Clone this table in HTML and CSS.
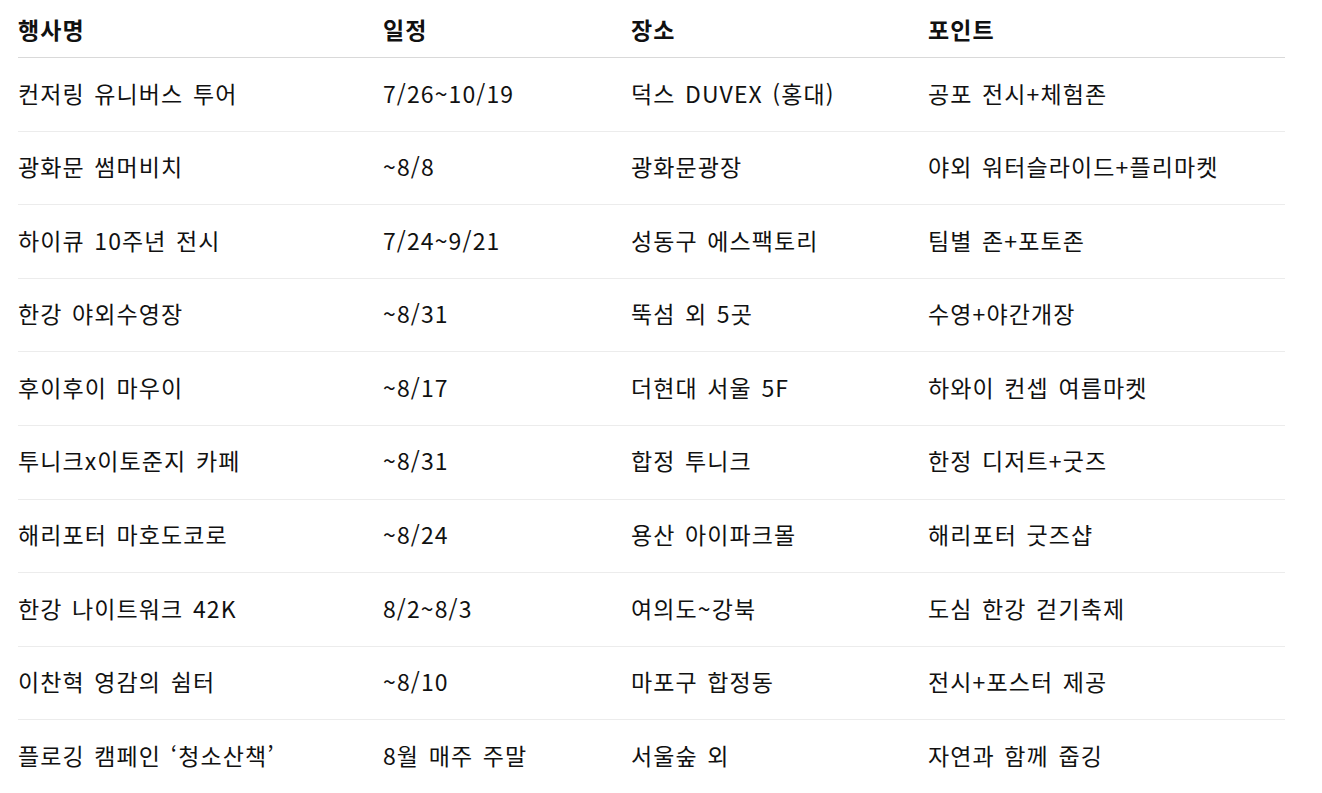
FILE: index.html
```html
<!DOCTYPE html>
<html lang="ko">
<head>
<meta charset="utf-8">
<link rel="stylesheet" href="styles.css">
</head>
<body>
<table class="events">
  <colgroup>
    <col class="c1"><col class="c2"><col class="c3"><col class="c4">
  </colgroup>
  <thead>
    <tr><th>행사명</th><th>일정</th><th>장소</th><th>포인트</th></tr>
  </thead>
  <tbody>
    <tr><td>컨저링 유니버스 투어</td><td>7/26~10/19</td><td>덕스 DUVEX (홍대)</td><td>공포 전시+체험존</td></tr>
    <tr><td>광화문 썸머비치</td><td>~8/8</td><td>광화문광장</td><td>야외 워터슬라이드+플리마켓</td></tr>
    <tr><td>하이큐 10주년 전시</td><td>7/24~9/21</td><td>성동구 에스팩토리</td><td>팀별 존+포토존</td></tr>
    <tr><td>한강 야외수영장</td><td>~8/31</td><td>뚝섬 외 5곳</td><td>수영+야간개장</td></tr>
    <tr><td>후이후이 마우이</td><td>~8/17</td><td>더현대 서울 5F</td><td>하와이 컨셉 여름마켓</td></tr>
    <tr><td>투니크x이토준지 카페</td><td>~8/31</td><td>합정 투니크</td><td>한정 디저트+굿즈</td></tr>
    <tr><td>해리포터 마호도코로</td><td>~8/24</td><td>용산 아이파크몰</td><td>해리포터 굿즈샵</td></tr>
    <tr><td>한강 나이트워크 42K</td><td>8/2~8/3</td><td>여의도~강북</td><td>도심 한강 걷기축제</td></tr>
    <tr><td>이찬혁 영감의 쉼터</td><td>~8/10</td><td>마포구 합정동</td><td>전시+포스터 제공</td></tr>
    <tr><td>플로깅 캠페인 ‘청소산책’</td><td>8월 매주 주말</td><td>서울숲 외</td><td>자연과 함께 줍깅</td></tr>
  </tbody>
</table>
</body>
</html>
```

FILE: styles.css
```css
html, body {
  margin: 0;
  padding: 0;
  background: #ffffff;
}
body {
  font-family: "Noto Sans CJK KR", "Noto Sans", sans-serif;
  color: #111111;
  font-size: 23px;
  letter-spacing: 1.1px;
  word-spacing: 2px;
}
.events {
  margin-left: 18px;
  width: 1267px;
  border-collapse: collapse;
  table-layout: fixed;
}
.c1 { width: 365px; }
.c2 { width: 248px; }
.c3 { width: 297px; }
.c4 { width: 357px; }
.events th {
  text-align: left;
  font-weight: 700;
  line-height: 30px;
  padding: 14px 0 13px 0;
  border-bottom: 1px solid #d9d9d9;
}
.events td {
  line-height: 30px;
  padding: 19.5px 0 23.1px 0;
  border-bottom: 1px solid #ececec;
  white-space: nowrap;
}
```
